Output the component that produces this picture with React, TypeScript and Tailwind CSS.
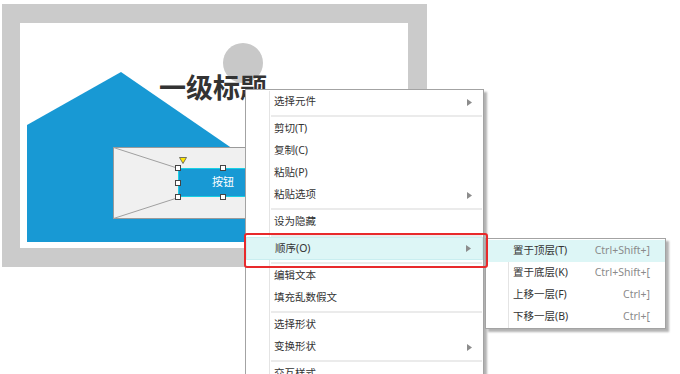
import React from "react";

const font = { fontFamily: '"Noto Sans", "Noto Sans CJK SC", sans-serif' };

type Item = { label?: string; sub?: boolean; sep?: boolean; active?: boolean };

const menuItems: Item[] = [
  { label: "选择元件", sub: true },
  { sep: true },
  { label: "剪切(T)" },
  { label: "复制(C)" },
  { label: "粘贴(P)" },
  { label: "粘贴选项", sub: true },
  { sep: true },
  { label: "设为隐藏" },
  { sep: true },
  { label: "顺序(O)", sub: true, active: true },
  { sep: true },
  { label: "编辑文本" },
  { label: "填充乱数假文" },
  { sep: true },
  { label: "选择形状" },
  { label: "变换形状", sub: true },
  { sep: true },
  { label: "交互样式" },
];

const subItems = [
  { label: "置于顶层(T)", key: "Ctrl+Shift+]", active: true },
  { label: "置于底层(K)", key: "Ctrl+Shift+[" },
  { label: "上移一层(F)", key: "Ctrl+]" },
  { label: "下移一层(B)", key: "Ctrl+[" },
];

const Arrow = () => (
  <svg width="5" height="7" viewBox="0 0 5 7" className="shrink-0">
    <path d="M0 0 L5 3.5 L0 7 Z" fill="#8c8c8c" />
  </svg>
);

const Handle = ({ x, y }: { x: number; y: number }) => (
  <div
    className="absolute w-[6px] h-[6px] bg-white border border-[#444]"
    style={{ left: x - 3, top: y - 3 }}
  />
);

const ContextMenu = () => (
  <div className="absolute left-[245px] top-[89px] w-[239px] h-[300px] bg-white border border-[#a3a3a3] pt-[1px] shadow-[3px_3px_2px_rgba(0,0,0,0.3)]">
    {menuItems.map((it, i) =>
      it.sep ? (
        <div key={i} className="flex h-[5px]">
          <div className="w-[24px] border-r border-[#e4e4e4]" />
          <div className="flex-1 flex items-center pl-[1px] pr-[1px]">
            <div className="h-[2px] w-full bg-[#ebebeb]" />
          </div>
        </div>
      ) : (
        <div
          key={i}
          className={`flex h-[22px] items-center ${
            it.active ? "bg-[#ddf6f6] border border-[#c9eef0] -mt-[1px] h-[23px]" : ""
          }`}
        >
          <div className={`w-[24px] h-full ${it.active ? "" : "border-r border-[#e4e4e4]"}`} />
          <span className="pl-[4px] flex-1 text-[10.5px] text-[#333]">{it.label}</span>
          <div className="pr-[11px] flex items-center">{it.sub && <Arrow />}</div>
        </div>
      )
    )}
  </div>
);

const SubMenu = () => (
  <div className="absolute left-[485px] top-[238px] w-[181px] bg-white border border-[#a3a3a3] pt-[1px] shadow-[3px_3px_2px_rgba(0,0,0,0.3)]">
    {subItems.map((it, i) => (
      <div
        key={i}
        className={`flex h-[22px] items-center ${it.active ? "bg-[#ddf6f6]" : ""}`}
      >
        <div className={`w-[23px] h-full ${it.active ? "" : "border-r border-[#e4e4e4]"}`} />
        <span className="pl-[4px] flex-1 text-[10.5px] text-[#333]">{it.label}</span>
        <span className="pr-[15px] text-[10.5px] text-[#8a8a8a]">{it.key}</span>
      </div>
    ))}
  </div>
);

export default function App() {
  return (
    <div className="relative w-[680px] h-[374px] bg-white overflow-hidden" style={font}>
      {/* page frame */}
      <div className="ml-[2px] mt-[4px] w-[425px] h-[263px] bg-[#cbcbcb] pt-[19px] pb-[19px] pl-[18px] pr-[19px]">
        <div className="relative w-full h-full bg-white">
          <svg width="388" height="225" className="absolute left-0 top-0">
            <circle cx="223" cy="40" r="20" fill="#c8c8c8" />
            <polygon points="7,219 7,102 101,49 280,172 280,219" fill="#1899d4" />
            <rect x="93.5" y="124.5" width="220" height="71" fill="#f0f0f0" stroke="#9a9a9a" />
            <line x1="93.5" y1="124.5" x2="313.5" y2="195.5" stroke="#a0a0a0" />
            <line x1="93.5" y1="195.5" x2="313.5" y2="124.5" stroke="#a0a0a0" />
          </svg>
          <div className="absolute left-[139px] top-[50px] text-[27px] font-bold leading-none text-[#333]" style={{ fontFamily: '"Noto Sans CJK SC", sans-serif' }}>
            一级标题
          </div>
          {/* selected button */}
          <div className="absolute left-[158px] top-[145px] w-[90px] h-[29px] bg-[#1899d4] border border-[#19d0e4] flex items-center justify-center text-[11px] text-white">
            按钮
          </div>
          <Handle x={158} y={145} />
          <Handle x={203} y={145} />
          <Handle x={158} y={159.5} />
          <Handle x={158} y={174} />
          <Handle x={203} y={174} />
          <svg width="8" height="7" viewBox="0 0 8 7" className="absolute left-[159px] top-[134px]">
            <path d="M0.5 0.5 L7.5 0.5 L4 6.5 Z" fill="#ffe600" stroke="#555" strokeWidth="0.8" />
          </svg>
        </div>
      </div>

      <ContextMenu />
      <SubMenu />

      {/* red highlight box */}
      <div className="absolute left-[244px] top-[233px] w-[244px] h-[35px] border-2 border-[#e8292b] rounded-[3px]" />
    </div>
  );
}
